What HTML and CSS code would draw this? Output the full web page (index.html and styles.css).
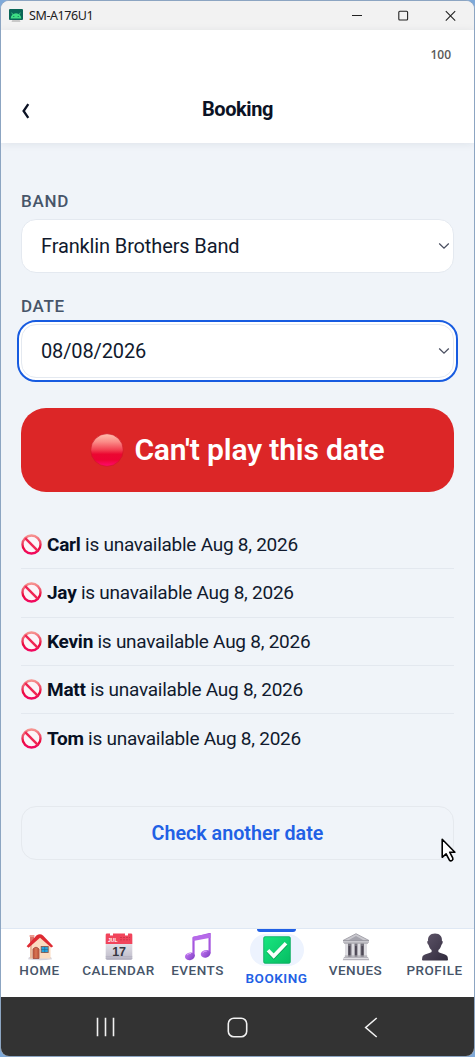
FILE: index.html
```html
<!DOCTYPE html>
<html lang="en">
<head>
<meta charset="utf-8">
<title>SM-A176U1</title>
<link rel="stylesheet" href="styles.css">
</head>
<body>
<svg class="defs" width="0" height="0" aria-hidden="true">
  <defs>
    <linearGradient id="pink" x1="0" y1="0" x2="0" y2="1"><stop offset="0" stop-color="#f6928f"/><stop offset=".4" stop-color="#ee4765"/><stop offset=".65" stop-color="#eb0a3e"/><stop offset="1" stop-color="#f1085f"/></linearGradient>
    <linearGradient id="ball" x1="0" y1="0" x2="0" y2="1"><stop offset="0" stop-color="#ffc0ae"/><stop offset=".25" stop-color="#fb8c87"/><stop offset=".5" stop-color="#f23e50"/><stop offset=".63" stop-color="#eb0731"/><stop offset=".8" stop-color="#ed0334"/><stop offset="1" stop-color="#ff0b70"/></linearGradient>
    <linearGradient id="violet" x1="0" y1="0" x2="1" y2="1"><stop offset="0" stop-color="#c77bf5"/><stop offset="1" stop-color="#7a3cc0"/></linearGradient>
    <linearGradient id="paper" x1="0" y1="0" x2="0" y2="1"><stop offset="0" stop-color="#f4f3f7"/><stop offset="1" stop-color="#bdbac8"/></linearGradient>
    <linearGradient id="green" x1="0" y1="0" x2="1" y2="1"><stop offset="0" stop-color="#18e57f"/><stop offset="1" stop-color="#06bd63"/></linearGradient>
    <linearGradient id="bust" x1="0" y1="0" x2="1" y2="1"><stop offset="0" stop-color="#61576b"/><stop offset="1" stop-color="#302a3c"/></linearGradient>
    <symbol id="no" viewBox="0 0 21 21"><circle cx="10.5" cy="10.5" r="9" fill="#fbf4f8" stroke="url(#pink)" stroke-width="2.4"/><path d="M4.2 4.2l12.6 12.6" stroke="#ef2553" stroke-width="2.4"/></symbol>
  </defs>
</svg>
<div class="window">
  <div class="titlebar">
    <svg class="app-icon" width="14" height="14" viewBox="0 0 14 14"><path d="M3.5 10.5h7l1 2.6h-9z" fill="#c9c9c9"/><rect width="14" height="11" rx="1" fill="#0a6657"/><path d="M1.7 9.5a5.3 5.3 0 0110.6 0z" fill="#3ddc84"/><path d="M3.8 5.6L2.7 3.6M10.2 5.6L11.300 3.600" stroke="#3ddc84" stroke-width=".8"/><circle cx="4.8" cy="7.500" r=".6" fill="#0a6657"/><circle cx="9.200" cy="7.500" r=".6" fill="#0a6657"/></svg>
    <span class="window-title">SM-A176U1</span>
    <svg class="controls" width="106" height="12" viewBox="0 0 106 12" fill="none" stroke="#222" stroke-width="1.1"><path d="M1 5.500h10M94.8 1.200l9.400 9.400M104.200 1.200l-9.400 9.400"/><rect x="47.800" y="1.200" width="8.800" height="8.800" rx="1"/></svg>
  </div>
  <header class="header">
    <div class="status">100</div>
    <div class="heading">
      <svg class="back" width="9" height="16" viewBox="0 0 9 16"><path d="M7.300 1.200L2.600 8l4.700 6.800" fill="none" stroke="#0b1224" stroke-width="2.300"/></svg>
      <h1 class="title">Booking</h1>
    </div>
  </header>
  <main class="content">
    <div class="label">BAND</div>
    <div class="select"><span class="value band">Franklin Brothers Band</span><svg width="12" height="8" viewBox="0 0 12 8"><path d="M1.2 1.5L6 6.2l4.8-4.7" fill="none" stroke="#4b5061" stroke-width="1.3"/></svg></div>
    <div class="label label-date">DATE</div>
    <div class="select focused"><span class="value">08/08/2026</span><svg width="12" height="8" viewBox="0 0 12 8"><path d="M1.2 1.5L6 6.2l4.8-4.7" fill="none" stroke="#4b5061" stroke-width="1.3"/></svg></div>
    <div class="result"><svg width="34" height="34" viewBox="0 0 34 34"><circle cx="17" cy="17" r="16.3" fill="url(#ball)" stroke="#cf1826" stroke-width=".7"/></svg><span class="result-text">Can't play this date</span></div>
    <ul class="people">
      <li class="person"><svg width="21" height="21"><use href="#no"/></svg><span><b>Carl</b> is unavailable Aug 8, 2026</span></li>
      <li class="person"><svg width="21" height="21"><use href="#no"/></svg><span><b>Jay</b> is unavailable Aug 8, 2026</span></li>
      <li class="person"><svg width="21" height="21"><use href="#no"/></svg><span><b>Kevin</b> is unavailable Aug 8, 2026</span></li>
      <li class="person"><svg width="21" height="21"><use href="#no"/></svg><span><b>Matt</b> is unavailable Aug 8, 2026</span></li>
      <li class="person"><svg width="21" height="21"><use href="#no"/></svg><span><b>Tom</b> is unavailable Aug 8, 2026</span></li>
    </ul>
    <div class="again">Check another date</div>
  </main>
  <nav class="tabs">
    <div class="tab"><svg width="28" height="28" viewBox="0 0 28 28"><path d="M3 24h22l1 2.2q-12 2-24 0z" fill="#d8d5dd"/><path d="M4 2.6h4v8H4z" fill="#dc7068"/><path d="M3.6 2h4.8v2H3.6z" fill="#ec9a90"/><path d="M4 12l10-8.5L24.5 12v13.5H4z" fill="#fbdcc0"/><path d="M4 12l2-2v15.5H4z" fill="#e9b99c"/><path d="M.6 13.2L10.4 2.5Q14 .2 17 2.5l10.2 10.7-2 1.4L14 4.7 2.6 14.7z" fill="#de2a32"/><path d="M7 25.5V16q3-3.5 6 0v9.5z" fill="#c96043" stroke="#9e4a3e" stroke-width=".8"/><path d="M10 15v10" stroke="#df8865" stroke-width=".8"/><rect x="15.2" y="13.5" width="7" height="6" fill="#26a4df" stroke="#8b5c50" stroke-width=".9"/><path d="M18.7 13.5v6M15.2 16.5h7" stroke="#1e668d" stroke-width=".6"/></svg><span>HOME</span></div>
    <div class="tab"><svg width="28" height="28" viewBox="0 0 28 28"><rect x=".7" y="2" width="26.6" height="25" rx="1.4" fill="url(#paper)"/><path d="M.7 23.7h26.6M.7 25.4h26.6" stroke="#aaa7b8" stroke-width=".6"/><path d="M.7 11V1.7Q.7.5 2 .5h3v2h3v-2h12v2h3v-2h3q1.3 0 1.3 1.2V11z" fill="#f1445b"/><text class="month" x="3" y="8.7">JUL</text><path d="M15 4.5h10M15 6.8h10" stroke="#cf344a" stroke-width="1" stroke-dasharray="2 1"/><text class="day" x="14" y="23.300" text-anchor="middle">17</text></svg><span>CALENDAR</span></div>
    <div class="tab"><svg width="28" height="28" viewBox="0 0 28 28"><path d="M9.5 23V5L25.6 1v19.5" fill="none" stroke="#a557de" stroke-width="2.2"/><path d="M9.2 3.500L26.400.4v4.400L9.200 8z" fill="#b669e9"/><ellipse cx="5.9" cy="23.3" rx="5" ry="3.8" fill="url(#violet)" transform="rotate(-15 5.9 23.3)"/><ellipse cx="21.6" cy="20.8" rx="4.9" ry="3.8" fill="url(#violet)" transform="rotate(-15 21.6 20.8)"/><path d="M3 22q2-2 4-1.5M18.8 19.6q2-2 4-1.5" fill="none" stroke="#dca7fa"/></svg><span>EVENTS</span></div>
    <div class="tab active"><div class="pill"><svg width="28" height="28" viewBox="0 0 28 28"><rect x=".7" y=".7" width="26.6" height="26.6" rx="1.4" fill="url(#green)" stroke="#08a95d" stroke-width=".8"/><path d="M5 14.8l5.7 5.9L23 8" fill="none" stroke="#079c52" stroke-width="4.2"/><path d="M5 14.2l5.7 5.8L23 7.3" fill="none" stroke="#f8fffc" stroke-width="3.700"/></svg></div><span>BOOKING</span></div>
    <div class="tab"><svg width="28" height="28" viewBox="0 0 28 28"><path d="M14 .7L27 7.5v2.4H1V7.5z" fill="#c9c8ce"/><path d="M14 3L6 7.4h16z" fill="#a4a3ac"/><path d="M14 .7L27 7.5H1z" fill="none" stroke="#96949d" stroke-width=".8"/><path d="M3 10h22v14H3z" fill="#77747e"/><path d="M4.5 10v14M11 10v14M17 10v14M23.5 10v14" stroke="#dddce1" stroke-width="3"/><path d="M7.4 13v11M13.9 13v11M20.3 13v11" stroke="#4d4855" stroke-width="1.8"/><path d="M2 10.2h24M2.8 23.2h22.4" stroke="#aba9b0" stroke-width="1.3"/><path d="M2 24h24l1.3 3.3H.7z" fill="#b6b4bc"/><path d="M1.3 25.5h25.4" stroke="#e0dfe3"/></svg><span>VENUES</span></div>
    <div class="tab"><svg width="28" height="28" viewBox="0 0 28 28"><path d="M14 .5c5 0 7.4 3.5 6.9 7.3 1.3.2 1 3-.5 4.1-.7 2.8-1.8 4.1-3 5.2v2c2.1 1.4 8.7 2.1 9.3 5.1l.3 2.6q0 .6-1 .6H2q-1 0-1-.6l.3-2.6c.6-3 7.2-3.7 9.3-5.1v-2c-1.2-1.1-2.3-2.4-3-5.2-1.5-1.1-1.8-3.9-.5-4.1C6.600 4 9 .5 14 .5z" fill="url(#bust)"/></svg><span>PROFILE</span></div>
  </nav>
  <div class="android">
    <svg width="19" height="20" viewBox="0 0 19 20" stroke="#f1f1f1" stroke-width="1.600"><path d="M1.500 .7v18.500M9.500 .7v18.500M17.500 .7v18.500"/></svg>
    <svg width="21" height="21" viewBox="0 0 21 21"><rect x="1.300" y="1.300" width="18.400" height="18.400" rx="5.500" fill="none" stroke="#f1f1f1" stroke-width="1.600"/></svg>
    <svg width="14" height="21" viewBox="0 0 14 21"><path d="M12.700 1L1.700 10.500l11 9.500" fill="none" stroke="#f1f1f1" stroke-width="1.600"/></svg>
  </div>
  <svg class="cursor" width="16" height="25" viewBox="0 0 16 25"><path d="M1.200 1.300v18l3.900-3.500 3.200 6.100q1.200 1.500 2.800.5 1.300-1 .6-2.500l-3-5.700h5.200z" fill="#fff" stroke="#000" stroke-width="1.600" stroke-linejoin="round"/></svg>
</div>
</body>
</html>
```

FILE: styles.css
```css
* { box-sizing: border-box; }
body { margin: 0; width: 475px; height: 1057px; background: #7ea9d9; font-family: Roboto, "Liberation Sans", sans-serif; color: #111a2e; overflow: hidden; }
svg { display: block; flex: none; }
.defs { position: absolute; }
.window { position: relative; width: 475px; height: 1057px; border: 1px solid #8ca5c2; border-radius: 9px; overflow: hidden; display: flex; flex-direction: column; background: #f0f4f9; white-space: nowrap; }
.titlebar { height: 29px; background: #f2f2f2; display: flex; align-items: center; padding-left: 8px; }
.window-title { font: 12.5px "Noto Sans", sans-serif; color: #202020; margin-left: 6px; letter-spacing: -.4px; }
.controls { margin-left: auto; margin-right: 17px; }
.header { position: relative; height: 113px; background: #fff; box-shadow: 0 1px 8px rgba(25,40,65,.08); }
.status { text-align: right; padding: 17px 23px 0 0; font: 600 12px/16px "Open Sans", sans-serif; color: #5a5a5a; }
.heading { display: flex; align-items: center; justify-content: center; height: 30px; margin-top: 31px; position: relative; }
.back { position: absolute; left: 20px; top: 9px; }
.title { margin: 0; font-size: 20px; line-height: 30px; font-weight: 700; color: #0b1224; letter-spacing: -.4px; }
.content { height: 785px; padding: 48px 20px 0; }
.label { color: #475569; font-weight: 500; font-size: 17px; line-height: 20px; letter-spacing: .7px; }
.label-date { margin-top: 23px; }
.select { height: 54px; margin-top: 8px; padding: 0 3px 0 19px; border: 1px solid #e4e9f0; border-radius: 15px; background: #fff; display: flex; align-items: center; justify-content: space-between; }
.focused { outline: 2px solid #175be0; outline-offset: 2px; box-shadow: 0 0 0 3px #fff; }
.value { font-size: 20px; line-height: 28px; letter-spacing: -.13px; }
.result { height: 84px; margin-top: 29.500px; border-radius: 25px; background: #dc2627; color: #fff; display: flex; align-items: center; justify-content: center; gap: 10px; }
.result-text { font-size: 30px; font-weight: 600; letter-spacing: -.15px; }
.people { list-style: none; margin: 29.500px 0 0; padding: 0; }
.person { height: 48.300px; display: flex; align-items: center; gap: 5px; border-bottom: 1px solid #e3e8ef; font-size: 19px; letter-spacing: -.25px; }
.person:last-child { border-bottom: 0; }
.person b { color: #071024; font-weight: 700; }
.again { height: 54px; margin-top: 44px; border: 1px solid #e5e9ee; border-radius: 15px; color: #2160e5; font-size: 19.700px; font-weight: 600; display: flex; align-items: center; justify-content: center; }
.tabs { height: 69px; background: #fff; border-top: 1px solid #dfe8f4; display: grid; grid-template-columns: repeat(6, 79px); position: relative; left: -1px; width: 475px; }
.tab { display: flex; flex-direction: column; align-items: center; padding-top: 4px; color: #475569; font-size: 13.500px; line-height: 16px; font-weight: 500; letter-spacing: .5px; }
.tab > span { margin-top: 1px; }
.active { color: #2160e5; font-weight: 600; position: relative; padding-top: 3px; }
.active::before { content: ""; position: absolute; top: 0; left: 20px; width: 39px; height: 3px; border-radius: 0 0 3px 3px; background: #2160e5; }
.pill { width: 54px; height: 32px; margin-top: 2px; border-radius: 16px; background: #edf3fe; display: grid; place-items: center; }
.active > span { margin-top: 4px; }
.month { font: bold 5px "Liberation Sans", sans-serif; fill: #fff; letter-spacing: 0; }
.day { font: bold 12.500px "Liberation Sans", sans-serif; fill: #363640; letter-spacing: -.3px; }
.android { height: 59px; background: #333; display: grid; grid-template-columns: 209px 54px 214px; justify-items: center; align-items: center; padding-top: 1px; }
.cursor { position: absolute; left: 440px; top: 837px; }
```
